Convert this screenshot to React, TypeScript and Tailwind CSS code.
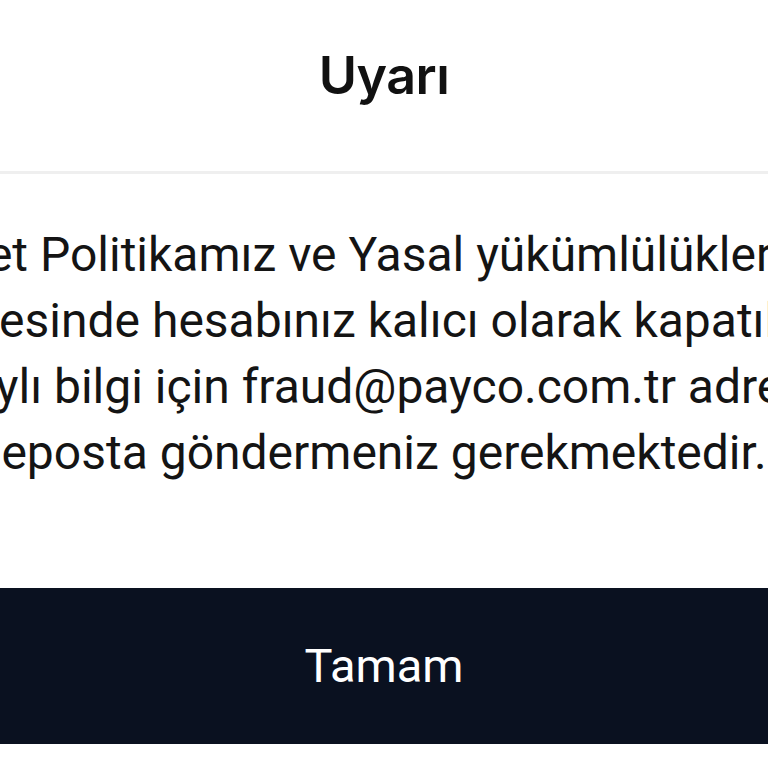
const lines = [
  "Şirket Politikamız ve Yasal yükümlülüklerimiz",
  "çerçevesinde hesabınız kalıcı olarak kapatılmıştır.",
  "Detaylı bilgi için fraud@payco.com.tr adresine",
  "eposta göndermeniz gerekmektedir.",
];

export default function App() {
  return (
    <div className="h-[768px] w-[768px] overflow-hidden bg-white">
      <div className="h-[171px] pt-[44px]">
        <h1 className="text-center font-['Inter',sans-serif] text-[52px] font-semibold leading-[64px] tracking-[-0.5px] text-[#111111]">
          Uyarı
        </h1>
      </div>
      <div className="h-[3px] bg-[#efefef]" />

      <div className="overflow-hidden pt-[48px] pb-[102px] font-['Roboto',sans-serif] text-[48px] leading-[66px] text-[#141414]">
        {lines.map((line) => (
          <div key={line} className="flex justify-center whitespace-nowrap">
            <span>{line}</span>
          </div>
        ))}
      </div>

      <button
        type="button"
        className="flex h-[156px] w-full items-center justify-center bg-[#0a1120] font-['Roboto',sans-serif] text-[47px] text-white"
      >
        Tamam
      </button>
    </div>
  );
}
